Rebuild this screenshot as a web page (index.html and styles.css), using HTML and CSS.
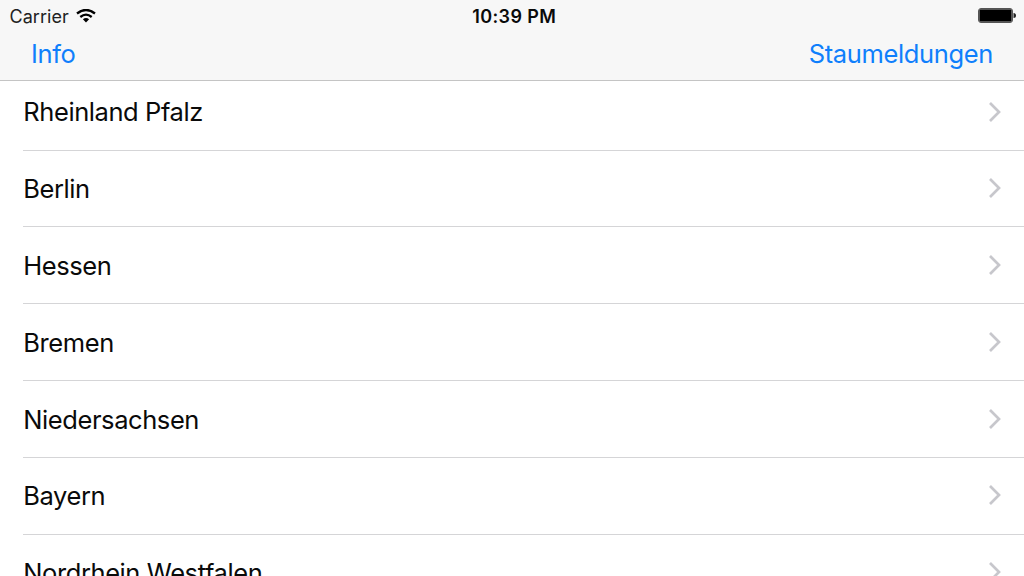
FILE: index.html
```html
<!DOCTYPE html>
<html lang="de">
<head>
<meta charset="utf-8">
<title>Staumeldungen</title>
<link rel="stylesheet" href="styles.css">
</head>
<body>
<header class="header">
  <div class="status">
    <div class="carrier"><span class="carrier-name">Carrier</span>
      <svg class="wifi" width="20" height="14" viewBox="0 0 20 14"><path d="M1 4.500Q10-2.600 19 4.500M4.300 8Q10 3.300 15.700 8" fill="none" stroke="#000" stroke-width="2.300"/><path d="M6.900 10.300Q10 7.500 13.100 10.300L10 13.500Z"/></svg>
    </div>
    <div class="clock"><span class="clock-text">10:39 PM</span></div>
    <svg class="battery" width="38" height="16" viewBox="0 0 38 16"><rect x=".5" y=".5" width="34" height="14" rx="2.500" fill="#aaa" stroke="#555"/><rect x="1.500" y="1.500" width="32" height="12" rx="1"/><path d="M35.500 5Q38 5 38 7.500T35.500 10Z" fill="#222"/></svg>
  </div>
  <nav class="nav"><a class="link"><span class="info">Info</span></a><a class="link"><span class="stau">Staumeldungen</span></a></nav>
</header>
<main class="list">
  <div class="row"><span class="label">Rheinland Pfalz</span><svg class="chevron" width="14" height="22" viewBox="0 0 14 22"><path d="M2 2L11 11L2 20"/></svg></div>
  <div class="row"><span class="label">Berlin</span><svg class="chevron" width="14" height="22" viewBox="0 0 14 22"><path d="M2 2L11 11L2 20"/></svg></div>
  <div class="row"><span class="label">Hessen</span><svg class="chevron" width="14" height="22" viewBox="0 0 14 22"><path d="M2 2L11 11L2 20"/></svg></div>
  <div class="row"><span class="label">Bremen</span><svg class="chevron" width="14" height="22" viewBox="0 0 14 22"><path d="M2 2L11 11L2 20"/></svg></div>
  <div class="row"><span class="label">Niedersachsen</span><svg class="chevron" width="14" height="22" viewBox="0 0 14 22"><path d="M2 2L11 11L2 20"/></svg></div>
  <div class="row"><span class="label">Bayern</span><svg class="chevron" width="14" height="22" viewBox="0 0 14 22"><path d="M2 2L11 11L2 20"/></svg></div>
  <div class="row"><span class="label">Nordrhein Westfalen</span><svg class="chevron" width="14" height="22" viewBox="0 0 14 22"><path d="M2 2L11 11L2 20"/></svg></div>
</main>
</body>
</html>
```
FILE: styles.css
```css
* { box-sizing: border-box; }
body { margin: 0; height: 576px; overflow: hidden; display: flex; flex-direction: column; background: #fff; color: #0a0a0a; font-family: Inter, "Liberation Sans", sans-serif; }
.header { flex: none; height: 81px; background: #f7f7f7; border-bottom: 1px solid #c4c4c4; }
.status { height: 32px; display: grid; grid-template-columns: 1fr 100px 1fr; align-items: center; padding: 0 8px 0 9.5px; font-size: 18px; }
.carrier { display: flex; align-items: center; gap: 7px; color: #222; letter-spacing: .05px; }
.wifi { margin-bottom: 1px; }
.clock { padding-left: 3px; text-align: center; font-weight: 600; letter-spacing: .4px; white-space: nowrap; }
.battery { justify-self: end; }
.nav { height: 43px; display: flex; justify-content: space-between; align-items: center; padding: 0 31px 1px; font-size: 25.5px; letter-spacing: -.36px; color: #0f7ffc; }
.list { flex: 1; overflow: hidden; }
.row { height: 76.8px; margin-left: 23px; padding: 0 22px .4px .3px; display: flex; align-items: center; justify-content: space-between; border-bottom: 1px solid #d5d5d7; font-size: 25.5px; letter-spacing: -.42px; }
.row:first-child { height: 69.6px; padding-bottom: 7.6px; }
.label { padding-top: .8px; white-space: nowrap; }
.chevron { fill: none; stroke: #c7c7cc; stroke-width: 2.7; }
```
